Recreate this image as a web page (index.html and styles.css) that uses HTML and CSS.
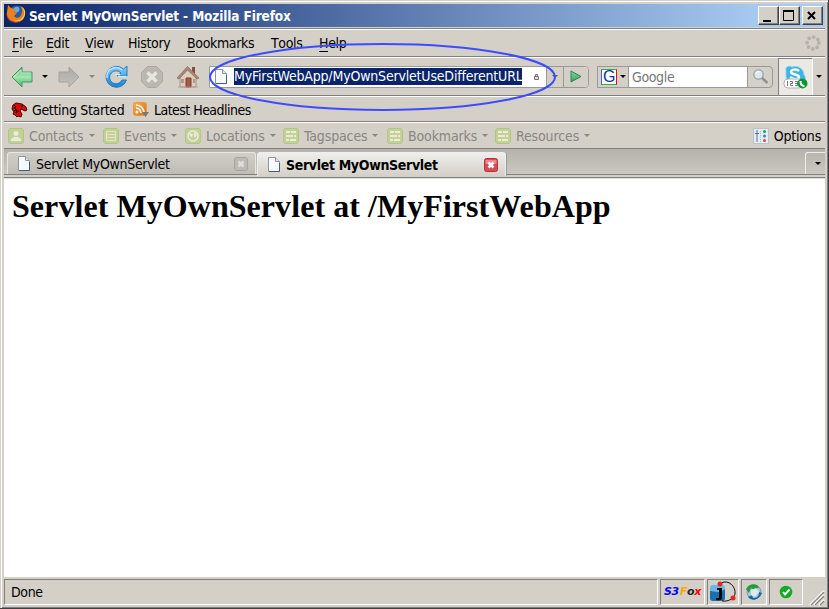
FILE: index.html
```html
<!DOCTYPE html>
<html lang="en">
<head>
<meta charset="utf-8">
<title>Servlet MyOwnServlet - Mozilla Firefox</title>
<link rel="stylesheet" href="styles.css">
</head>
<body>
<svg width="0" height="0" class="defs">
  <defs>
    <linearGradient id="green" x1="0" y1="0" x2="0" y2="1"><stop offset="0" stop-color="#5fb98a"/><stop offset=".5" stop-color="#a4e6ae"/><stop offset="1" stop-color="#41b660"/></linearGradient>
    <linearGradient id="play" x1="0" y1="0" x2="0" y2="1"><stop offset="0" stop-color="#8fd0a0"/><stop offset="1" stop-color="#2fa458"/></linearGradient>
    <linearGradient id="gray" x1="0" y1="0" x2="0" y2="1"><stop offset="0" stop-color="#aaa9a5"/><stop offset="1" stop-color="#c5c2bb"/></linearGradient>
    <linearGradient id="blue" x1="0" y1="0" x2="0" y2="1"><stop offset="0" stop-color="#87cfff"/><stop offset="1" stop-color="#1681d2"/></linearGradient>
    <linearGradient id="orange" x1="0" y1="0" x2="1" y2="1"><stop offset="0" stop-color="#ffb04b"/><stop offset="1" stop-color="#d96c13"/></linearGradient>
    <symbol id="page" viewBox="0 0 12 15"><path d="M.5.5h7l4 4v10H.5z" fill="#f8fafb" stroke="#8d969e"/><path d="M7.500.5v4h4" fill="#dce1e5" stroke="#8d969e"/><path d="M11.500 6v8.500H1" fill="none" stroke="#3d6080"/></symbol>
    <symbol id="list" viewBox="0 0 16 16"><rect x=".5" y=".5" width="15" height="15" rx="2.500" fill="#c3d196" stroke="#b0c684"/><path d="M3 4h4M8 4h5M3 8h7M11 8h2M3 12h3M7 12h6" stroke="#eceadb" stroke-width="2"/></symbol>
  </defs>
</svg>
<div class="window">
  <header class="title">
    <svg class="fox" width="20" height="20" viewBox="0 0 20 20"><circle cx="10.500" cy="9" r="7.500" fill="#285b9e"/><path d="M8 4c3-3 7 0 5 3-1 2-4 2-5 0z" fill="#69a9d7"/><path d="M2 1l3 3 4 1-1 3 3 1-3 3c2 3 6 2 7-1 2-4 1-7-1-9 4 1 6 5 5 9-1 5-5 8-10 7C3 17 0 13 1 8z" fill="#ee801c"/><path d="M16 3c3 4 3 9-1 12-3 2-7 2-9 0 4 4 10 3 12-2 2-4 1-8-2-10z" fill="#ffd45d"/><path d="M1 9c0 5 3 9 8 9 3 0 6-1 8-3-4 5-12 5-15 0-1-2-2-4-1-6z" fill="#bf3d12"/></svg>
    <span>Servlet MyOwnServlet - Mozilla Firefox</span>
    <div class="winbtns">
      <button><svg width="16" height="16"><path d="M3 12h8v2H3z"/></svg></button>
      <button><svg width="16" height="16"><path d="M2.500 3h10v9.500h-10z" fill="none" stroke="#000"/><path d="M2 2h11v2H2z"/></svg></button>
      <button class="close"><svg width="16" height="16"><path d="M4 4l7 7M11 4l-7 7" stroke="#000" stroke-width="2"/></svg></button>
    </div>
  </header>
  <nav class="menu">
    <span class="m1"><u>F</u>ile</span><span class="m2"><u>E</u>dit</span><span class="m3"><u>V</u>iew</span><span class="m4">Hi<u>s</u>tory</span><span class="m5"><u>B</u>ookmarks</span><span class="m6"><u>T</u>ools</span><span class="m7"><u>H</u>elp</span>
    <svg class="throbber" width="16" height="16"><circle cx="8" cy="8" r="6" fill="none" stroke="#b3b1ad" stroke-width="3.800" stroke-linecap="round" stroke-dasharray=".01 4.702"/></svg>
  </nav>
  <div class="navbar">
    <svg class="back" width="22" height="22" viewBox="0 0 22 22"><path d="M1 11L11 1v5h10v10H11v5z" fill="url(#green)" stroke="#439766"/><path d="M3 11l7-7v3h10" fill="none" stroke="#b6edbf"/></svg>
    <i class="arrow a-back"></i>
    <svg class="fwd" width="22" height="22" viewBox="0 0 22 22"><path d="M21 11L11 1v5H1v10h10v5z" fill="url(#gray)" stroke="#a5a39f"/></svg>
    <i class="arrow dim a-fwd"></i>
    <svg class="reload" width="24" height="24" viewBox="0 0 24 24"><path d="M17 8a6.500 6.500 0 1 0 1 7h4.500A10.500 10.500 0 1 1 19.500 4L23 1v10H13z" fill="url(#blue)" stroke="#267db9"/><path d="M11 9.500h5l-2 2h8.500" fill="none" stroke="#c9edff"/><path d="M3 13a9 9 0 0 1 15-8" fill="none" stroke="#b8e4ff" stroke-width="1.500"/></svg>
    <svg class="stop" width="24" height="24" viewBox="0 0 24 24"><path d="M7.500 1.500h9l6 6v9l-6 6h-9l-6-6v-9z" fill="#bbb8b2" stroke="#aaa8a3"/><path d="M7.500 7.500l9 9M16.500 7.500l-9 9" stroke="#e8e5e0" stroke-width="3.500"/></svg>
    <svg class="home" width="24" height="24" viewBox="0 0 24 24"><path d="M16 2h3v7h-3z" fill="#874f3d"/><path d="M4 11l8-8 8 8v11H4z" fill="#dfccba" stroke="#a79485"/><path d="M1 13L11.500 1.500 23 13l-2 1-9.500-9L3 14z" fill="#a88576" stroke="#8a6d61" stroke-width=".7"/><path d="M10 13h5v9h-5z" fill="#a45b41" stroke="#754232"/><path d="M5 14h3v4H5zM17 14h2v4h-2z" fill="#a99c90"/><path d="M2 22h20" stroke="#aca69b"/></svg>
    <div class="url">
      <svg width="12" height="15"><use href="#page"/></svg>
      <span class="address">MyFirstWebApp/MyOwnServletUseDifferentURL</span>
      <svg class="lock" width="6" height="6"><path d="M1.500 2.500h4v3h-4zM2.500 2V.5h2V2" fill="#ddd" stroke="#777"/></svg>
      <div class="urldrop"><i class="arrow dark"></i></div>
      <div class="go"><svg width="12" height="13"><path d="M1 1l10 5.500L1 12z" fill="url(#play)" stroke="#27884f"/></svg></div>
    </div>
    <div class="search">
      <div class="engine"><span class="g">G</span><i class="arrow"></i></div>
      <span class="query">Google</span>
      <div class="mag"><svg width="18" height="18"><circle cx="6.500" cy="6.500" r="4.700" fill="#dce7ed" stroke="#9fa8ad" stroke-width="1.500"/><path d="M10 10l5.500 5" stroke="#96908a" stroke-width="2.500"/><path d="M4 6c0-2 2-3 4-2" fill="none" stroke="#fff"/></svg></div>
    </div>
    <div class="skype"><svg width="26" height="26" viewBox="0 0 26 26"><path d="M3 5C2 2 6 0 9 2c5-2 12 1 12 8 3 3 1 8-4 7C9 20 2 16 3 9z" fill="#39b4e9" stroke="#91d6f3"/><path d="M16 6c-2-2-8-2-8 1s8 2 8 5-6 3-9 0" fill="none" stroke="#fff" stroke-width="2.500"/><rect x="1" y="14" width="19" height="9" rx="4" fill="#fff" stroke="#b3b3b3"/><path d="M4.500 16v5M7 16.500h2.500v2H7.500v2H10M12 16.500h2.500v4H12M12 18.500h2.500" fill="none" stroke="#777"/><circle cx="19.500" cy="18.500" r="5" fill="#159334"/><path d="M17.500 16c0 3 1.500 5 4 5" fill="none" stroke="#fff" stroke-width="2"/></svg></div>
    <i class="arrow"></i>
  </div>
  <div class="favorites">
    <svg class="dragon" width="17" height="16" viewBox="0 0 17 16"><path d="M2 3l3-2 6 1 4 3 1 3-2 1-4-2-1 2 2 3-1 3-3-1-1 1-2-2-2-1 1-2-2-3z" fill="#d90b09" stroke="#420504"/><path d="M3 3l2 2-2 1 2 1-2 2 3-1-1 3 3-2M10 4h2" fill="none" stroke="#210503"/></svg>
    <span class="started">Getting Started</span>
    <svg class="rss" width="16" height="16"><rect x=".5" y=".5" width="13" height="13" rx="2" fill="url(#orange)" stroke="#e29749"/><circle cx="4" cy="10" r="1.500" fill="#fff"/><path d="M3 6a5 5 0 0 1 5 5M3 3a8 8 0 0 1 8 8" fill="none" stroke="#fff" stroke-width="1.500"/><path d="M9 10h7l-3.500 5z" fill="#777"/></svg>
    <span class="latest">Latest Headlines</span>
  </div>
  <div class="tools">
    <div class="tool t1"><svg width="16" height="16"><rect x=".5" y=".5" width="15" height="15" rx="2.500" fill="#c3d196" stroke="#b0c684"/><circle cx="8" cy="5.500" r="2.500" fill="#eceadb"/><path d="M3 13v-2l3-2h4l3 2v2z" fill="#eceadb"/></svg><span>Contacts</span><i class="arrow dim"></i></div>
    <div class="tool t2"><svg width="16" height="16"><rect x=".5" y=".5" width="15" height="15" rx="2.500" fill="#c3d196" stroke="#b0c684"/><path d="M3.500 3.500h9v9h-9zM3 6.500h10M3 9.500h10" fill="none" stroke="#e5e5cc"/></svg><span>Events</span><i class="arrow dim"></i></div>
    <div class="tool t3"><svg width="16" height="16"><rect x=".5" y=".5" width="15" height="15" rx="2.500" fill="#c3d196" stroke="#b0c684"/><circle cx="8" cy="8" r="5" fill="#c3d196" stroke="#eceadb" stroke-width="1.500"/><path d="M4 5l4 1-1 3-2-1zM9 4l3 3-2 3-1-2z" fill="#eceadb"/></svg><span>Locations</span><i class="arrow dim"></i></div>
    <div class="tool t4"><svg width="16" height="16"><use href="#list"/></svg><span>Tagspaces</span><i class="arrow dim"></i></div>
    <div class="tool t5"><svg width="16" height="16"><use href="#list"/></svg><span>Bookmarks</span><i class="arrow dim"></i></div>
    <div class="tool t6"><svg width="16" height="16"><use href="#list"/></svg><span>Resources</span><i class="arrow dim"></i></div>
    <div class="options"><svg width="16" height="16"><rect x=".5" y=".5" width="15" height="15" fill="#e4edf5" stroke="#b7c4d0"/><path d="M4 2v12M2 5.500h4" stroke="#61758a"/><path d="M7.500 3v11" stroke="#a9b8c6" stroke-dasharray="1 1"/><circle cx="11.500" cy="3.500" r="1.500" fill="#27a635"/><circle cx="11.500" cy="8" r="1.500" fill="#2788c9"/><circle cx="11.500" cy="12.500" r="1.500" fill="#dc4548"/></svg><span>Options</span></div>
  </div>
  <div class="tabs">
    <div class="tab"><svg width="12" height="15"><use href="#page"/></svg><span>Servlet MyOwnServlet</span><svg class="x" width="14" height="14"><rect x=".5" y=".5" width="13" height="13" rx="2" fill="#bdb9b4" stroke="#a8a5a1"/><path d="M4.500 4.500l5 5M9.500 4.500l-5 5" stroke="#e2dfda" stroke-width="2.500"/></svg></div>
    <div class="tab active"><svg width="12" height="15"><use href="#page"/></svg><span>Servlet MyOwnServlet</span><svg class="x" width="14" height="14"><rect x=".5" y=".5" width="13" height="13" rx="2" fill="#dc4953" stroke="#b3343d"/><path d="M1.500 2h11v4h-11z" fill="#ed8789"/><path d="M4.500 4.500l5 5M9.500 4.500l-5 5" stroke="#fff" stroke-width="2.500"/></svg></div>
    <div class="alltabs"><i class="arrow"></i></div>
  </div>
  <main><h1>Servlet MyOwnServlet at /MyFirstWebApp</h1></main>
  <footer>
    <div class="status"><span>Done</span></div>
    <div class="s3"><b>S3</b><b class="f">F</b><b class="o">o</b><b class="r">x</b></div>
    <div class="java"><svg width="28" height="24" viewBox="0 0 28 24"><rect x="1" y="5" width="15" height="16" rx="3" fill="#6db8e2"/><path d="M1 11c6 0 9 3 15-2v9c0 3-3 3-4 3H4c-2 0-3-1-3-3z" fill="#1c6fac"/><path d="M12 3c8-4 15 4 14 11-1 4-6 8-13 7" fill="none" stroke="#111"/><circle cx="11" cy="4" r="2.500" fill="#e52527"/><circle cx="24" cy="18" r="2.500" fill="#e52527"/><path d="M8 8h5v10q0 3-6 2v-2h3v-8H8z" fill="#050505"/></svg></div>
    <div class="globe"><svg width="18" height="18" viewBox="0 0 18 18"><circle cx="9" cy="9" r="7" fill="#a6cbdc" stroke="#7596a9"/><path d="M1 6C5-1 12 1 14 4L9 7 6 5l-2 5z" fill="#279b3c"/><path d="M17 10c-3 7-10 9-14 4l4-2 1 3c5 0 6-3 6-6z" fill="#1869a6"/><path d="M6 7l5-2 3 4-4 5-4-2z" fill="#dce9ed"/></svg></div>
    <div class="ok"><svg width="14" height="14"><circle cx="7" cy="7" r="6.300" fill="#12a927"/><path d="M4 7l2 2.500 4.500-5" fill="none" stroke="#fff" stroke-width="2"/></svg></div>
    <svg class="grip" width="15" height="15"><path d="M1 15L15 1M5 15L15 5M10 15l5-5" stroke="#fff" stroke-width="2"/><path d="M2 15L15 2M6 15l9-9M11 15l4-4" stroke="#85827f" stroke-width="1.300"/></svg>
  </footer>
</div>
<svg class="annotation" width="350" height="70"><ellipse cx="174.500" cy="34" rx="172.500" ry="33" fill="none" stroke="#3d4cff" stroke-width="2"/></svg>
</body>
</html>
```

FILE: styles.css
```css
* { box-sizing: border-box; }
body { margin: 0; overflow: hidden; background: #d4d0c8; font: 14px/18px "DejaVu Sans Condensed", "DejaVu Sans", sans-serif; font-stretch: condensed; letter-spacing: -.35px; color: #000; }
svg { display: block; flex: none; overflow: visible; }
.defs { position: absolute; }
.window { width: 829px; height: 609px; display: flex; flex-direction: column; padding: 4px 3px 3px 4px; border-right: 1px solid #404040; border-bottom: 1px solid #404040; box-shadow: inset 1px 1px #d4d0c8, inset 2px 2px #fff, inset -1px -1px #808080; background: #d4d0c8; white-space: nowrap; }
.title { height: 23px; flex: none; display: flex; align-items: center; background: linear-gradient(90deg, #0a246a, #a6caf0 92%); color: #fff; font-weight: bold; padding-left: 2px; }
.fox { margin: -3px 3px 0 0; }
.title > span { letter-spacing: -.13px; width: 280px; font-size: 13.500px; margin-top: 1px; }
.winbtns { display: flex; margin-left: auto; padding-right: 2px; }
button { padding: 1px; margin: 0; width: 21px; height: 19px; border: 1px solid; border-color: #fff #404040 #404040 #fff; box-shadow: inset -1px -1px #808080; background: #d4d0c8; }
.winbtns .close { margin-left: 2px; }
.menu { height: 29px; flex: none; margin-top: 1px; border-top: 1px solid #808080; border-bottom: 1px solid #808080; box-shadow: inset 0 1px #fff; display: flex; align-items: center; padding-left: 8px; }
u { text-decoration: none; border-bottom: 1px solid #000; display: inline-block; line-height: 15px; }
.m1 { width: 34px; } .m2 { width: 39px; } .m3 { width: 43px; } .m4 { width: 59px; } .m5 { width: 84px; } .m6 { width: 48px; }
.throbber { margin-left: auto; margin-right: 4px; }
.navbar { height: 39px; flex: none; border-bottom: 1px solid #808080; box-shadow: inset 0 1px #fff; display: flex; align-items: center; padding: 1px 0 0 7px; }
.arrow { flex: none; border: 3px solid transparent; border-top-color: #000; border-bottom: 0; width: 6px; height: 3px; }
.arrow.dim { border-top-color: #888681; }
.arrow.dark { border-top-color: #555; }
.a-back { margin: 0 10px 0 9px; }
.a-fwd { margin: 0 9px 0 9px; }
.stop { margin-left: 12px; }
.home { margin-left: 12px; margin-right: 9px; }
.url { width: 380px; flex: none; height: 22px; border: 1px solid #999; border-radius: 0 4px 4px 0; background: #fff; display: flex; align-items: center; padding-left: 5px; }
.address { background: #0a246a; color: #fff; width: 288px; margin-left: 7px; height: 17px; line-height: 17px; letter-spacing: -.18px; }
.lock { margin-left: 11px; }
.urldrop { width: 17px; height: 20px; border-left: 1px solid #999; background: #d4d0c8; margin-left: auto; display: flex; align-items: center; padding-left: 5px; }
.go { width: 25px; height: 20px; border-left: 1px solid #999; background: #d4d0c8; display: flex; align-items: center; justify-content: center; border-radius: 0 4px 4px 0; }
.search { width: 176px; flex: none; height: 22px; margin-left: 8px; display: flex; border: 1px solid #999; border-radius: 0 4px 4px 0; }
.engine { width: 31px; border-right: 1px solid #999; display: flex; align-items: center; gap: 3px; padding-left: 3px; }
.g { width: 16px; height: 16px; background: #fff; border: 1px solid #32ae42; border-right-color: red; border-left-color: #4062c5; color: #07339c; font: 16px/14px "Liberation Sans", sans-serif; text-align: center; }
.query { flex: 1; background: #fff; color: #777; padding: 1px 3px; line-height: 18px; }
.mag { width: 25px; border-left: 1px solid #999; padding: 1px 4px; }
.skype { margin: 0 3px 0 5px; width: 35px; flex: none; height: 37px; background: #ece9e4; border-left: 1px solid #808080; border-top: 1px solid #808080; border-right: 1px solid #fff; padding: 6px 4px; }
.favorites { height: 26px; flex: none; display: flex; align-items: center; box-shadow: inset 0 1px #fff; border-bottom: 1px solid #808080; padding: 2px 0 0 7px; }
.started { width: 94px; margin-left: 4px; letter-spacing: -.33px; }
.rss { margin-left: 7px; }
.latest { margin-left: 5px; letter-spacing: -.53px; }
.tools { height: 27px; flex: none; box-shadow: inset 0 1px #fff; border-bottom: 1px solid #808080; display: flex; align-items: center; color: #888681; padding: 1px 0 0 4px; letter-spacing: -.13px; }
.tool, .options { display: flex; align-items: center; gap: 5px; }
.t1 { width: 95px; } .t2 { width: 82px; } .t3 { width: 98px; } .t4 { width: 104px; } .t5 { width: 108px; }
.options { color: #000; margin-left: auto; padding-right: 4px; letter-spacing: -.2px; }
.tabs { height: 29px; flex: none; display: flex; align-items: flex-start; padding: 3px 0 0 3px; background: linear-gradient(#b5b2ac, #cbc8c1 25px, #808080 25px, #808080 26px, #d4d0c8 26px, #d4d0c8 28px, #808080 28px); }
.tab { height: 22px; width: 249px; border: 1px solid #e8e6e2; border-bottom: 0; border-radius: 3px 3px 0 0; background: linear-gradient(#d1cec8, #bfbbb5); display: flex; align-items: center; padding-left: 10px; }
.tab > span { margin-left: 6px; letter-spacing: -.3px; }
.tab .x { margin-left: auto; margin-right: 7px; }
.tab.active { height: 24px; margin-left: 1px; background: linear-gradient(#efeeeb, #d4d0c8); border-color: #eee; box-shadow: 1px 0 #999; font-weight: bold; }
.tab.active > span { letter-spacing: -.33px; }
.alltabs { margin-left: auto; width: 20px; height: 22px; border: 1px solid #eee; border-right: 0; border-bottom: 0; border-radius: 3px 0 0 0; display: flex; align-items: center; padding-left: 9px; }
main { flex: 1; background: #fff; padding: 9px 8px 0; border-top: 1px solid #ddd; }
h1 { margin: 0; font: bold 32px/37px "Liberation Serif", serif; letter-spacing: .06px; }
footer { height: 28px; flex: none; display: flex; gap: 2px; padding: 2px 0 0; }
footer > div { border: 1px solid; border-color: #808080 #fff #fff #808080; display: flex; align-items: center; justify-content: center; }
footer .status { width: 654px; justify-content: flex-start; padding-left: 6px; }
.s3 { width: 45px; font: italic bold 11px/14px "DejaVu Sans", sans-serif; color: #00f; }
.s3 .f { color: orange; margin-left: 1px; } .s3 .o { color: #222; } .s3 .r { color: red; }
.java { width: 32px; } .globe { width: 26px; } .ok { width: 34px; }
.grip { align-self: flex-end; margin-left: auto; margin-right: 1px; }
.annotation { position: absolute; left: 208px; top: 43px; }
```
